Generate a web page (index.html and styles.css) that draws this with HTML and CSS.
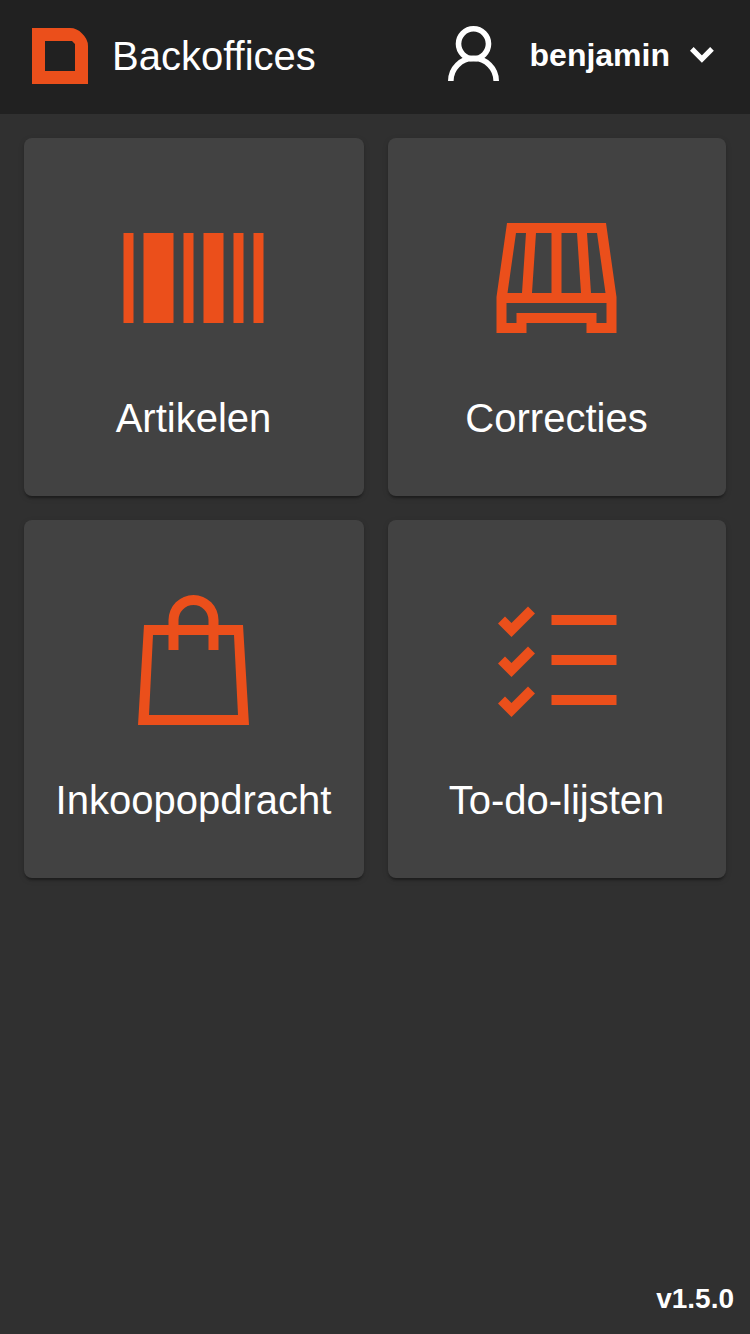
FILE: index.html
```html
<!DOCTYPE html>
<html lang="nl">
   <head>
      <meta charset="UTF-8">
      <meta name="viewport" content="width=device-width, initial-scale=1.0">
      <title>Backoffices</title>
      <link rel="stylesheet" href="styles.css">
   </head>
   <body>
      <header class="toolbar">
         <svg class="logo" width="56" height="56" viewBox="0 0 56 56">
            <path fill-rule="evenodd" d="M0 0H38Q45 0 50 5.500Q56 11 56 18V56H0ZM13 13V43H43V16L40 13Z" />
         </svg>
         <h1 class="title">Backoffices</h1>
         <button class="user">
            <svg class="user-icon" width="52" height="56" viewBox="0 0 52 56">
               <circle cx="25.5" cy="17.8" r="15" />
               <path d="M2.800 55a22.700 22.700 0 0 1 45.400 0" />
            </svg>
            <span class="user-name">benjamin</span>
            <svg class="chevron" width="24" height="16" viewBox="0 0 24 16">
               <path d="M1.800 1.900L11.900 12L22 1.900" />
            </svg>
         </button>
      </header>

      <main class="tiles">
         <a class="tile">
            <svg class="tile-icon" width="160" height="160" viewBox="0.5 0 160 160">
               <path d="M10 35h10v90H10zM30 35h30v90H30zM70 35h10v90H70zM90 35h20v90H90zM120 35h10v90h-10zM140 35h10v90h-10z" />
            </svg>
            <span class="tile-label">Artikelen</span>
         </a>
         <a class="tile">
            <svg class="tile-icon" width="160" height="160" viewBox="0.5 0 160 160">
               <path
                  fill-rule="evenodd"
                  d="M30.5 25H129.5L140 99V135H110V125H50V135H20V99ZM39.5 35L31 95H45.5L49.5 35ZM59.5 35L55.5 95H75V35ZM85 35V95H104.5L100.5 35ZM110.5 35L114.5 95H129L120.5 35ZM30 105V125H40V115H120V125H130V105Z"
                  />
            </svg>
            <span class="tile-label">Correcties</span>
         </a>
         <a class="tile">
            <svg class="tile-icon" width="160" height="160" viewBox="0.5 0 160 160">
               <path fill-rule="evenodd" d="M30.5 45H129.500L135.500 145H24.500ZM39.500 55L35.500 135H124.500L120.500 55Z" />
               <path d="M55 70V40a25 25 0 0 1 50 0V70H95V40a15 15 0 0 0-30 0V70Z" />
            </svg>
            <span class="tile-label">Inkoopopdracht</span>
         </a>
         <a class="tile">
            <svg class="tile-icon" width="160" height="160" viewBox="0.5 0 160 160">
               <path d="M75 35h65v10H75zM75 75h65v10H75zM75 115h65v10H75z" />
               <path d="M21.5 43.500l7-7 6.500 6.500 16.500-16.500 7 7L35 57zM21.500 83.500l7-7 6.500 6.500 16.500-16.500 7 7L35 97zM21.500 123.500l7-7 6.500 6.500 16.500-16.500 7 7L35 137z" />
            </svg>
            <span class="tile-label">To-do-lijsten</span>
         </a>
      </main>

      <footer class="version">v1.5.0</footer>
   </body>
</html>
```

FILE: styles.css
```css
* {
    box-sizing: border-box;
}
body {
    display: flex;
    flex-direction: column;
    min-height: 100vh;
    margin: 0;
    background: #303030;
    color: #fff;
    font-family: "Liberation Sans", Arial, sans-serif;
}

/* Toolbar */
.toolbar {
    display: flex;
    align-items: center;
    height: 114px;
    padding: 0 36px 2px 32px;
    background: #212121;
}
.logo {
    fill: #eb4f1b;
}
.title {
    margin: 0 0 0 24px;
    font-size: 40px;
    font-weight: 400;
    line-height: 48px;
}
.user {
    display: flex;
    align-items: center;
    margin-left: auto;
    padding: 0;
    border: 0;
    background: none;
    color: inherit;
    font: bold 32px/40px "Liberation Sans", Arial, sans-serif;
}
.user-icon {
    margin-top: -4px;
    fill: none;
    stroke: #fff;
    stroke-width: 5.6;
}
.user-name {
    margin: -2px 20px 0 30px;
}
.chevron {
    margin-top: -2px;
    fill: none;
    stroke: #fff;
    stroke-width: 5.2;
}

/* Tiles */
.tiles {
    display: grid;
    grid-template-columns: 340px 338px;
    grid-auto-rows: 358px;
    gap: 24px;
    padding: 24px;
}
.tile {
    display: flex;
    flex-direction: column;
    align-items: center;
    padding: 60px 1px 0 0;
    border-radius: 8px;
    background: #424242;
    box-shadow: 0 4px 2px -2px rgba(0, 0, 0, 0.2), 0 2px 2px 0 rgba(0, 0, 0, 0.14), 0 2px 6px 0 rgba(0, 0, 0, 0.12);
}
.tile-icon {
    fill: #eb4f1b;
}
.tile-label {
    margin-top: 36px;
    font-size: 40px;
    line-height: 48px;
}

.version {
    margin-top: auto;
    padding: 0 16px 19px;
    font-size: 28px;
    font-weight: 700;
    line-height: 32px;
    text-align: right;
}
```
